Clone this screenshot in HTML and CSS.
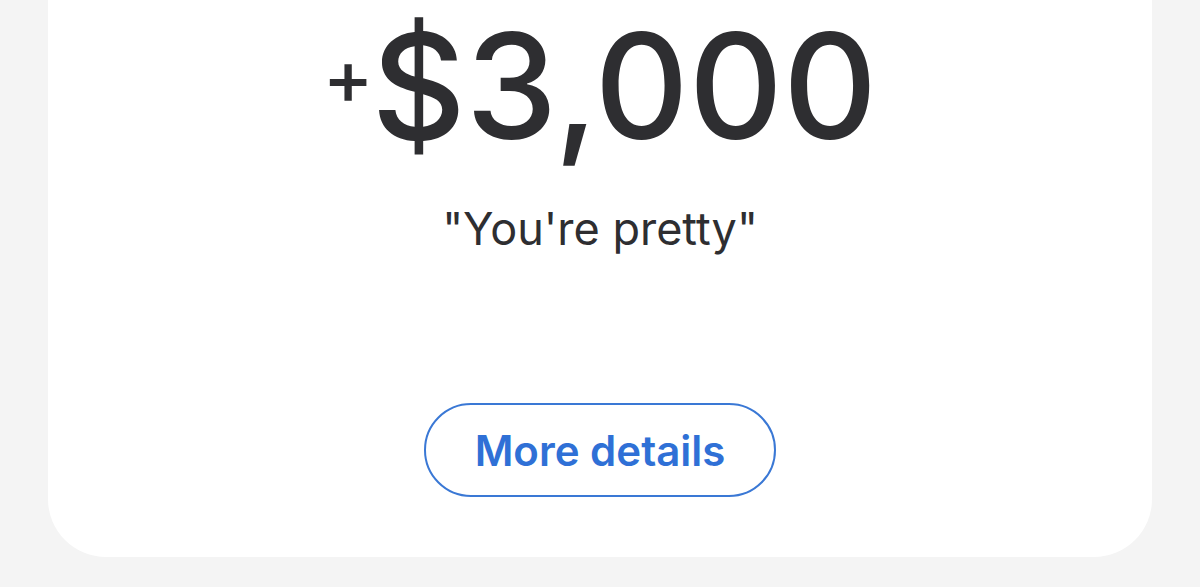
FILE: index.html
```html
<!DOCTYPE html>
<html>
<head>
<meta charset="utf-8">
<link rel="stylesheet" href="styles.css">
</head>
<body>
<div class="page">
  <div class="card">
    <div class="amount"><span class="plus">+</span>$3,000</div>
    <div class="note">"You're pretty"</div>
    <button class="details">More details</button>
  </div>
</div>
</body>
</html>
```
FILE: styles.css
```css
html, body {
  margin: 0;
  padding: 0;
  background: #f4f4f4;
}
.page {
  width: 1200px;
  height: 587px;
  padding: 0 48px;
  box-sizing: border-box;
  overflow: hidden;
}
.card {
  background: #ffffff;
  height: 557px;
  border-radius: 0 0 58px 58px;
  display: flex;
  flex-direction: column;
  align-items: center;
  font-family: Inter, "Noto Sans", sans-serif;
  color: #2e2e31;
}
.amount {
  margin-top: 13px;
  font-size: 146px;
  line-height: 1;
  font-weight: 500;
  letter-spacing: 0;
  white-space: nowrap;
}
.plus {
  font-size: 76px;
  vertical-align: 35px;
  margin-right: -2px;
}
.note {
  margin-top: 47px;
  font-size: 45px;
  line-height: 1;
  font-weight: 400;
}
.details {
  margin-top: 152px;
  width: 352px;
  height: 94px;
  border: 2px solid #3a78d5;
  border-radius: 47px;
  background: #ffffff;
  color: #2f70d6;
  font-family: Inter, "Noto Sans", sans-serif;
  font-size: 42px;
  font-weight: 600;
  cursor: pointer;
}
```
